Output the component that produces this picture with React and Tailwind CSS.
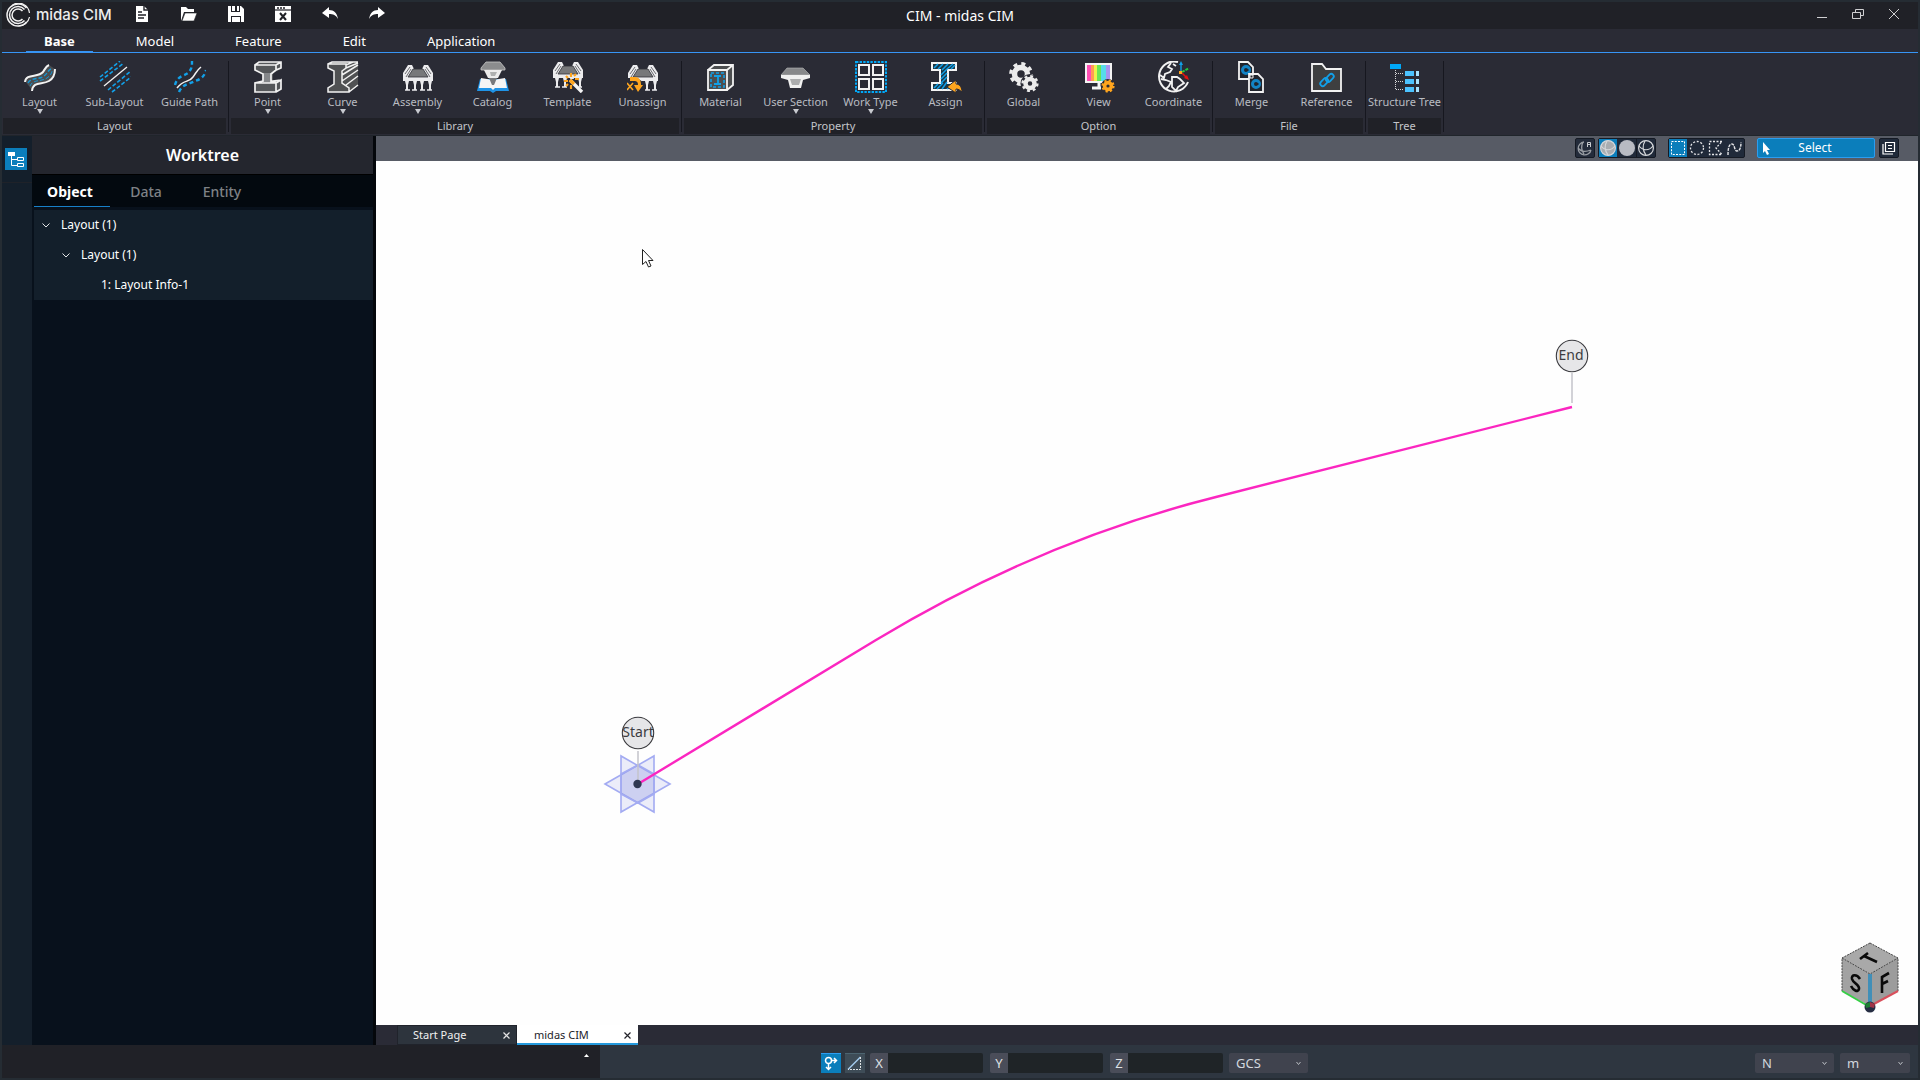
import React, { useState } from "react";
import clsx from "clsx";

/* ---------- quick access icons ---------- */

const NewIcon = () => (
  <svg width="16" height="18" viewBox="0 0 16 18">
    <path d="M2 1h8l4 4v12H2z" fill="#fff" />
    <path d="M10 1v4h4M4 7h4M4 10h8M4 13h6" stroke="#202127" strokeWidth="1.4" fill="none" />
  </svg>
);

const OpenIcon = () => (
  <svg width="18" height="18" viewBox="0 0 18 18">
    <path d="M1 16V2h5l2 2h6v3H4z" fill="#fff" />
    <path d="M5 8h12l-3 8H2z" fill="#fff" stroke="#202127" strokeWidth="0.6" />
  </svg>
);

const SaveIcon = () => (
  <svg width="18" height="18" viewBox="0 0 18 18">
    <path d="M1 1h13l3 3v13H1z" fill="#fff" />
    <path d="M4 1h9v6H4zM4 11h10v6H4z" fill="#202127" />
    <path d="M5 1h3v5H5zM10 1h2v5h-2zM5 12h8v5H5z" fill="#fff" />
  </svg>
);

const CloseFileIcon = () => (
  <svg width="18" height="18" viewBox="0 0 18 18">
    <path d="M1 1h16v16H1z" fill="#fff" />
    <path d="M1 5h16" stroke="#202127" strokeWidth="1.2" />
    <path d="M3 3h2M6 3h2M9 3h2" stroke="#202127" strokeWidth="1.4" />
    <path d="M6 8l6 7M12 8l-6 7" stroke="#202127" strokeWidth="2" />
  </svg>
);

const UndoIcon = () => (
  <svg width="18" height="14" viewBox="0 0 18 14">
    <path d="M8 0v3c5 0 8 3 9 9-2-4-5-5-9-5v4L1 6z" fill="#fff" />
  </svg>
);

const RedoIcon = () => (
  <svg width="18" height="14" viewBox="0 0 18 14">
    <path d="M10 0v3c-5 0-8 3-9 9 2-4 5-5 9-5v4l7-5z" fill="#fff" />
  </svg>
);

/* ---------- ribbon icons, all on a 32px grid ---------- */

const Icon = ({ children }) => (
  <svg width="32" height="32" viewBox="0 0 32 32" fill="none">
    {children}
  </svg>
);

const LayoutIcon = () => (
  <Icon>
    <path d="M1 20C2 12 14 17 19 11C21 8 22 5 25 4L31 8C31 13 30 17 25 20C18 24 9 20 8 29z" fill="#4b4d50" />
    <path d="M1 21C2 12 14 17 19 11C21 8 22 5 25 4" stroke="#f2f2f2" strokeWidth="2" />
    <path d="M8 30C9 20 18 24 25 20C30 17 31 13 31 8" stroke="#f2f2f2" strokeWidth="2" />
    <path d="M4 22C7 16 15 19 20 15C24 12 24 9 27 8" stroke="#1597d4" strokeWidth="1.4" strokeDasharray="4 2" />
    <path d="M6 25C9 18 17 21 23 17C26 15 28 12 28 10" stroke="#1597d4" strokeWidth="1" strokeDasharray="4 2" />
  </Icon>
);

const SubLayoutIcon = () => (
  <Icon>
    <path d="M5 25L28 6" stroke="#f2f2f2" strokeWidth="1.3" />
    <path d="M1 16L21 0M1 20L25 2M9 29L32 10M13 31L32 16" stroke="#12a0e8" strokeWidth="1.6" strokeDasharray="4 2" />
  </Icon>
);

const GuidePathIcon = () => (
  <Icon>
    <path d="M3 27C10 18 15 22 19 16C22 12 23 9 27 6" stroke="#f2f2f2" strokeWidth="1.5" />
    <path d="M1 24C3 15 10 15 14 12C18 8 18 5 18 0" stroke="#12a0e8" strokeWidth="2.4" strokeDasharray="4 3" />
    <path d="M5 31C8 23 16 23 21 20C28 18 31 14 32 9" stroke="#12a0e8" strokeWidth="2.4" strokeDasharray="4 3" />
  </Icon>
);

const PointIcon = () => (
  <Icon>
    <path d="M3 4L7 1H29V8L21 12V21H29V28L24 31H3V23L11 21V12L3 9z" fill="#55575a" />
    <path d="M11 12h8v10h-8z" fill="#85878a" />
    <path
      d="M3 4H24V9L19 13V21H24V31H3V22L11 20V13L3 9zM3 4L7 1H29V7L24 9M24 4L29 1M24 22L29 19V28L24 31M24 22L21 20L29 19M3 22H24"
      stroke="#f2f2f2"
      strokeWidth="1.7"
    />
  </Icon>
);

const CurveIcon = () => (
  <Icon>
    <path d="M1 4L5 1H31V25L22 31H1V27L7 23V10L1 7z" fill="#505153" />
    <path
      d="M1 3H19V7L15 10V22L22 27V31H1V27L7 23V10L1 7zM1 3L5 1H31M19 4L26 1M19 7L31 2M15 14L31 4M15 20L31 9M19 24L31 15M22 31L31 24"
      stroke="#f2f2f2"
      strokeWidth="1.5"
    />
  </Icon>
);

// bridge deck on four piers, shared by the assembly type icons
const Bridge = () => (
  <g>
    <path d="M1 12L6 4H10L12 8H20L22 4H26L31 12V20H1z" fill="#ececee" />
    <path d="M11 8H21L26 16H6z" fill="#77787a" stroke="#303137" strokeWidth="0.8" />
    <path d="M3 13L8 6M29 13L24 6M4 16L9 8M28 16L23 8" stroke="#6a6b70" strokeWidth="1" />
    <path d="M3 20H7L6 24V29H4V24zM11 20H15L14 24V29H12V24zM18 20H22L21 24V29H19V24zM26 20H30L29 24V29H27V24z" fill="#ececee" />
    <path d="M3 29H8M10 29H15M18 29H23M25 29H30" stroke="#ececee" strokeWidth="1.4" />
  </g>
);

const AssemblyIcon = () => (
  <Icon>
    <Bridge />
  </Icon>
);

const CatalogIcon = () => (
  <Icon>
    <path d="M3 18H29L32 30H19L16 32L13 30H0z" fill="#1f93e6" />
    <path d="M4 17L16 19L28 17L30 27H18L16 29L14 27H2z" fill="#f5f5f5" />
    <path d="M12 17H20L17 24H15z" fill="#77797c" />
    <path d="M9 1H23L28 7V9H4V7z" fill="#8b8c8e" stroke="#c8c8c8" strokeWidth="0.8" />
    <path d="M7 9H25L21 17H11z" fill="#ececec" />
    <path d="M13 11H20L18 15H14z" fill="#aeb0b0" />
  </Icon>
);

const TemplateIcon = () => (
  <Icon>
    <g transform="translate(0 -3)">
      <Bridge />
    </g>
    <path d="M15 18H24L28 28L20 27z" fill="#2a2b35" />
    <path d="M18 19L30 31" stroke="#f5f5f5" strokeWidth="3.4" />
    <path d="M18 19L22 23" stroke="#ffa51e" strokeWidth="3.4" />
    <path
      d="M19 12v4M19 24v4M12 20h4M23 18h4M14 15l2 2M24 13l-2 2M14 25l2-2"
      stroke="#ffa51e"
      strokeWidth="2.2"
    />
  </Icon>
);

const UnassignIcon = () => (
  <Icon>
    <Bridge />
    <path d="M0 17H10L16 21V31H0z" fill="#2a2b35" />
    <path d="M0 22l6 7M6 22l-6 7" stroke="#ffa51e" strokeWidth="1.6" />
    <path d="M3 16h5c4 0 6 3 6 8h-3c0-3-1-4-4-4H3z" fill="#ffa51e" />
    <path d="M7 24H16L11 31z" fill="#ffa51e" />
  </Icon>
);

const MaterialIcon = () => (
  <Icon>
    <path d="M3 9L9 4H28V24L23 29H3z" fill="#4c4e50" />
    <path d="M3 9H22V29H3zM3 9L9 4H28V24L22 29M22 9L28 4" stroke="#f2f2f2" strokeWidth="1.8" />
    <rect x="6" y="12" width="13" height="14" stroke="#12a0e8" strokeWidth="1.6" strokeDasharray="3 2" />
    <path d="M9 15H16M13 15V23M9 23H16" stroke="#12a0e8" strokeWidth="1.8" />
  </Icon>
);

const UserSectionIcon = () => (
  <Icon>
    <path d="M7 7H23L30 14H1z" fill="#87888a" stroke="#b9babb" strokeWidth="0.6" />
    <path d="M1 14H30V17L23 19L21 27H10L8 19L1 17z" fill="#f0f0f0" />
    <path d="M10 18H21L19 24H12z" fill="#acadae" />
  </Icon>
);

const WorkTypeIcon = () => (
  <Icon>
    <rect x="1" y="1" width="30" height="30" stroke="#00a8f8" strokeWidth="2" strokeDasharray="2.4 1.2" />
    <path d="M4 4H14V14H4zM18 4H28V14H18zM4 18H14V28H4zM18 18H28V28H18z" stroke="#f2f2f2" strokeWidth="2" />
  </Icon>
);

const AssignIcon = () => (
  <Icon>
    <path d="M2 2H26V9H18V22H26V29H2V22H10V9H2z" fill="#1b3644" stroke="#f4f4f4" strokeWidth="2" />
    <path
      d="M4 7L8 3M8 8L13 3M12 9L18 3M17 8L23 3M21 8L25 4M11 14L17 8M11 18L17 12M11 22L17 16M4 27L8 23M7 28L13 22M12 28L17 21M17 28L21 24"
      stroke="#12a0e8"
      strokeWidth="1.5"
    />
    <path d="M26 19V23C30 23 32 27 32 31C30 29 28 28 26 28V32L17 26z" fill="#ffa51e" stroke="#2a2b35" />
  </Icon>
);

const GlobalIcon = () => (
  <Icon>
    <circle cx="13" cy="13" r="6.5" stroke="#ececec" strokeWidth="5.5" />
    <circle cx="13" cy="13" r="10.2" stroke="#ececec" strokeWidth="3.4" strokeDasharray="4 4.01" />
    <circle cx="22" cy="22.5" r="9.5" fill="#2a2b35" />
    <circle cx="22" cy="22.5" r="4.5" stroke="#ececec" strokeWidth="4.5" />
    <circle cx="22" cy="22.5" r="7.4" stroke="#ececec" strokeWidth="2.4" strokeDasharray="2.9 2.91" />
  </Icon>
);

const ViewIcon = () => (
  <Icon>
    <path d="M3 3H8V21H3z" fill="#ff4fb4" />
    <path d="M8 3H11V21H8z" fill="#ff9b54" />
    <path d="M11 3H14V21H11z" fill="#eef04a" />
    <path d="M14 3H18V21H14z" fill="#67e557" />
    <path d="M18 3H23V21H18z" fill="#57dcea" />
    <path d="M23 3H28V21H23z" fill="#a894ee" />
    <path d="M3 3H28V21H3z" stroke="#f4f4f4" strokeWidth="2" />
    <path d="M16 21V26M9 27H18" stroke="#f4f4f4" strokeWidth="3" />
    <circle cx="25" cy="25" r="7" fill="#2a2b35" />
    <circle cx="25" cy="25" r="3.4" stroke="#ffa51e" strokeWidth="3.6" />
    <circle cx="25" cy="25" r="5.6" stroke="#ffa51e" strokeWidth="2" strokeDasharray="2.2 2.2" />
  </Icon>
);

const CoordinateIcon = () => (
  <Icon>
    <path d="M20 1A15 15 0 1 0 30 21" stroke="#f2f2f2" strokeWidth="2" />
    <path
      d="M13 2L10 6L14 8L12 11L7 13L6 17L2 14M3 18L8 19L13 21L11 25L8 28M15 3L18 5M14 16L19 16L22 18L26 22L20 26L18 30L14 26V21z"
      stroke="#f2f2f2"
      strokeWidth="1.8"
    />
    <path d="M23 10V2" stroke="#12a0e8" strokeWidth="1.4" />
    <path d="M21 4L23 0L25 4z" fill="#12a0e8" />
    <path d="M24 11L31 7" stroke="#24c93c" strokeWidth="2" strokeDasharray="3 1" />
    <path d="M24 12L29 17" stroke="#e01212" strokeWidth="1.6" />
    <path d="M31 19L26 17L29 14z" fill="#e01212" />
    <rect x="21" y="10" width="3" height="3" fill="#ffa51e" />
  </Icon>
);

const MergeIcon = () => (
  <Icon>
    <path d="M3 1H12L17 6V18H3z" stroke="#f2f2f2" strokeWidth="1.8" fill="#20242c" />
    <circle cx="10" cy="9" r="3.5" stroke="#1383c4" strokeWidth="3" />
    <path d="M13 13H22L27 18V31H13z" stroke="#f2f2f2" strokeWidth="1.8" fill="#20242c" />
    <circle cx="20" cy="23" r="3.5" stroke="#1383c4" strokeWidth="3" />
    <path d="M11 8V10M21 22V24" stroke="#20242c" strokeWidth="3" />
    <path d="M14 14H17V17H14z" stroke="#f2f2f2" strokeWidth="1" />
  </Icon>
);

const ReferenceIcon = () => (
  <Icon>
    <path d="M1 3H11L15 8H30V30H1z" stroke="#f2f2f2" strokeWidth="1.8" fill="#3e3f40" />
    <g transform="rotate(-45 16 19)" stroke="#12a0e8" strokeWidth="1.8">
      <rect x="8" y="16" width="9" height="5" rx="2.5" />
      <rect x="15" y="17" width="9" height="5" rx="2.5" />
    </g>
  </Icon>
);

const StructureTreeIcon = () => (
  <Icon>
    <path d="M1 3H12V8H1z" fill="#00a8f8" />
    <path d="M6.5 9V29M7 12.5H15M7 20.5H15M7 28.5H15" stroke="#d8d8d8" strokeWidth="1" strokeDasharray="1 1" />
    <path d="M16 10H25V15H16zM16 18H25V23H16zM16 26H25V31H16z" fill="#4cc3ff" />
    <path d="M27 10H30V15H27zM27 18H30V23H27zM27 26H30V31H27z" fill="#a5e2ff" />
  </Icon>
);

const ribbon = [
  {
    name: "Layout",
    tools: [
      { label: "Layout", icon: LayoutIcon, menu: true },
      { label: "Sub-Layout", icon: SubLayoutIcon },
      { label: "Guide Path", icon: GuidePathIcon },
    ],
  },
  {
    name: "Library",
    tools: [
      { label: "Point", icon: PointIcon, menu: true },
      { label: "Curve", icon: CurveIcon, menu: true },
      { label: "Assembly", icon: AssemblyIcon, menu: true },
      { label: "Catalog", icon: CatalogIcon },
      { label: "Template", icon: TemplateIcon },
      { label: "Unassign", icon: UnassignIcon },
    ],
  },
  {
    name: "Property",
    tools: [
      { label: "Material", icon: MaterialIcon },
      { label: "User Section", icon: UserSectionIcon, menu: true },
      { label: "Work Type", icon: WorkTypeIcon, menu: true },
      { label: "Assign", icon: AssignIcon },
    ],
  },
  {
    name: "Option",
    tools: [
      { label: "Global", icon: GlobalIcon },
      { label: "View", icon: ViewIcon },
      { label: "Coordinate", icon: CoordinateIcon },
    ],
  },
  {
    name: "File",
    tools: [
      { label: "Merge", icon: MergeIcon },
      { label: "Reference", icon: ReferenceIcon },
    ],
  },
  {
    name: "Tree",
    tools: [{ label: "Structure Tree", icon: StructureTreeIcon }],
  },
];

const quickActions = [
  { label: "New", icon: NewIcon },
  { label: "Open", icon: OpenIcon },
  { label: "Save", icon: SaveIcon },
  { label: "Close", icon: CloseFileIcon },
  { label: "Undo", icon: UndoIcon },
  { label: "Redo", icon: RedoIcon },
];

const TitleBar = () => (
  <header className="relative flex h-[27px] items-center justify-between bg-[#202127]">
    <div className="flex items-center">
      <div className="flex w-[116px] items-center gap-1 pl-1">
        <svg width="26" height="25" viewBox="0 0 25 25" fill="none" stroke="#f2f2f2">
          <path d="M20 5A11 11 0 1 0 20 19" strokeWidth="1.5" />
          <path d="M23 10A11 11 0 0 0 6 2" strokeWidth="1.2" />
          <path d="M18 6.5A8.5 8.5 0 1 0 18 17.5" strokeWidth="1.5" />
          <path d="M16 8A6 6 0 1 0 16 16" strokeWidth="1.5" />
          <path d="M23 14A11 11 0 0 1 12 23" strokeWidth="1.2" />
        </svg>
        <span className="font-[Inter,sans-serif] text-[15px] font-medium whitespace-nowrap text-[#ececec]">
          midas CIM
        </span>
      </div>
      {quickActions.map((action) => (
        <button
          key={action.label}
          aria-label={action.label}
          className="flex h-[27px] w-[47px] items-center justify-center pb-[3px]"
        >
          <action.icon />
        </button>
      ))}
    </div>
    <h1 className="absolute left-1/2 -translate-x-1/2 text-sm text-white">CIM - midas CIM</h1>
    <div className="flex items-center pr-[6px] pb-[3px]">
      <button aria-label="Minimize" className="flex w-9 justify-center">
        <svg width="12" height="12" viewBox="0 0 12 12">
          <path d="M1 9.5H11" stroke="#d0d0d2" />
        </svg>
      </button>
      <button aria-label="Restore" className="flex w-9 justify-center">
        <svg width="12" height="12" viewBox="0 0 12 12" fill="none" stroke="#d0d0d2">
          <path d="M0.5 4.5H8.5V10.5H0.5zM3.5 4V1.5H11.5V7.5H9" />
        </svg>
      </button>
      <button aria-label="Close window" className="flex w-9 justify-center">
        <svg width="12" height="12" viewBox="0 0 12 12">
          <path d="M1 1L11 11M11 1L1 11" stroke="#d0d0d2" />
        </svg>
      </button>
    </div>
  </header>
);

const menus = ["Base", "Model", "Feature", "Edit", "Application"];

const MenuTabs = () => {
  const [active, setActive] = useState("Base");

  return (
    <nav className="flex h-6 gap-[25px] border-b border-[#3795f5] pl-6">
      {menus.map((m) => (
        <button
          key={m}
          onClick={() => setActive(m)}
          className={clsx(
            "h-[23px] border-b px-[18px] text-[13px] leading-6 text-white",
            active === m ? "border-[#3795f5] font-bold" : "border-transparent"
          )}
        >
          {m}
        </button>
      ))}
    </nav>
  );
};

const Ribbon = () => (
  <div className="flex h-[83px] border-b border-[#20252b] pt-2">
    {ribbon.map((group) => (
      <section key={group.name} className="flex">
        <div className="flex flex-col">
          <div className="flex h-[57px]">
            {group.tools.map((tool) => (
              <button key={tool.label} className="flex w-[75px] flex-col items-center text-[11px] text-[#b9bcc2]">
                <tool.icon />
                <span className="h-[15px] leading-[18px] whitespace-nowrap">{tool.label}</span>
                {tool.menu && (
                  <svg width="6" height="5" viewBox="0 0 6 5" className="mt-px">
                    <path d="M0 0H6L3 5z" fill="#c8cad0" />
                  </svg>
                )}
              </button>
            ))}
          </div>
          <h2 className="mx-px h-4 bg-[#202127] text-center text-[11px] leading-4 text-[#c3c5ca]">{group.name}</h2>
        </div>
        <div className="mx-px h-[71px] w-px bg-[#16171f]" />
      </section>
    ))}
  </div>
);

const treeRows = [
  { label: "Layout (1)", pad: "pl-2", open: true },
  { label: "Layout (1)", pad: "pl-7", open: true },
  { label: "1: Layout Info-1", pad: "pl-12" },
];

const Worktree = () => {
  const [tab, setTab] = useState("Object");

  return (
    <aside className="flex shrink-0">
      <div className="w-[30px] bg-[#141f2b]">
        <div className="flex h-[47px] items-center border-b border-[#1f2229] pl-[3px]">
          <button aria-label="Worktree" className="h-[22px] w-[22px] bg-[#0b7ebb]">
            <svg width="22" height="22" viewBox="0 0 22 22" fill="none" stroke="#fff">
              <path d="M3 4H10V8H3z" fill="#fff" stroke="none" />
              <path d="M6.5 8V17.5H12M6.5 11.5H12M12.5 9.5H18.5V12.5H12.5zM12.5 15.5H18.5V18.5H12.5z" />
            </svg>
          </button>
        </div>
      </div>
      <div className="w-[341px] bg-[#08111c]">
        <h2 className="h-[39px] border-b border-black bg-[#24262e] text-center text-base leading-[38px] font-semibold text-white">
          Worktree
        </h2>
        <div className="flex h-8 bg-[#03090f] pl-[2px]">
          {["Object", "Data", "Entity"].map((t) => (
            <button
              key={t}
              onClick={() => setTab(t)}
              className={clsx(
                "w-[76px] border-b pr-1 text-sm leading-[34px]",
                tab === t ? "border-[#1880c8] font-bold text-white" : "border-transparent font-medium text-[#7f8286]"
              )}
            >
              {t}
            </button>
          ))}
        </div>
        <ul className="mt-[3px] ml-[2px] bg-[#131f2b] text-xs text-white">
          {treeRows.map((row, i) => (
            <li key={i} className={clsx("flex h-[30px] items-center gap-[11px]", row.pad)}>
              <svg width="8" height="8" viewBox="0 0 8 8" fill="none">
                {row.open && <path d="M0.5 2.5L4 6L7.5 2.5" stroke="#e4e6e8" />}
              </svg>
              {row.label}
            </li>
          ))}
        </ul>
      </div>
      <div className="w-[3px] bg-[#04070b]" />
    </aside>
  );
};

const Sphere = ({ fill }) => (
  <svg width="18" height="18" viewBox="0 0 18 18" fill="none" stroke="#d5d7da" strokeWidth="1.2">
    <circle cx="9" cy="9" r="7.4" fill={fill} />
    <path d="M2 7C6 12 12 12 16 7M8 2C5 7 6 12 9 16" />
  </svg>
);

const ViewToolbar = () => (
  <div className="flex h-[25px] items-center justify-end bg-[#575b65] pr-[19px] pb-px">
    <button
      aria-label="Auto view"
      className="flex h-5 w-5 items-center justify-center rounded-xs border border-[#151a24] bg-[#242c3b]"
    >
      <svg width="18" height="18" viewBox="0 0 18 18" fill="none" stroke="#999da3" strokeWidth="1.3">
        <path d="M8 3A6.5 6.5 0 1 0 15 11M2 9C5 13 10 13 15 11M7 3C5 7 5 11 8 15" />
        <path d="M11.5 8V3.5H14.5V8M11.5 5.5H14.5" stroke="#c9ccd0" strokeWidth="1" />
      </svg>
    </button>
    <div className="ml-[3px] flex h-5 items-center rounded-xs border border-[#151a24] bg-[#202a3a]">
      <button aria-label="Shaded with edges" className="bg-[#0b7ebb]">
        <Sphere fill="#a9adb1" />
      </button>
      <button aria-label="Shaded" className="flex h-[18px] w-5 items-center justify-center border-r border-[#151a24]">
        <span className="h-4 w-4 rounded-full bg-[#b8bbc3]" />
      </button>
      <button aria-label="Wireframe">
        <Sphere fill="none" />
      </button>
    </div>
    <div className="ml-3 flex h-5 items-center rounded-xs border border-[#151a24] bg-[#202a3a]">
      <button aria-label="Rectangle selection" className="bg-[#0b7ebb]">
        <svg width="18" height="18" viewBox="0 0 18 18" fill="none">
          <rect x="2.5" y="2.5" width="13" height="13" stroke="#fff" strokeDasharray="2 1.25" />
        </svg>
      </button>
      <button aria-label="Circle selection">
        <svg width="20" height="18" viewBox="0 0 20 18" fill="none">
          <circle cx="10" cy="9" r="6.5" stroke="#e4e5e8" strokeWidth="1.3" strokeDasharray="2 1.7" />
        </svg>
      </button>
      <button aria-label="Polygon selection">
        <svg width="18" height="18" viewBox="0 0 18 18" fill="none">
          <path d="M15 2.5H2.5V15.5H15L9 9z" stroke="#e4e5e8" strokeWidth="1.3" strokeDasharray="2 1.5" />
        </svg>
      </button>
      <button aria-label="Polyline selection">
        <svg width="19" height="18" viewBox="0 0 19 18" fill="none">
          <path d="M3 16C3 9 4 5 7 5C10 5 9 12 12 12C15 12 16 8 16 3" stroke="#e4e5e8" strokeWidth="1.4" strokeDasharray="3 1" />
        </svg>
      </button>
    </div>
    <button className="relative ml-3 h-5 w-[118px] rounded-xs border border-[#2c9df0] bg-[#0b7ebb] pr-[2px] text-xs leading-4 text-white">
      <svg width="10" height="13" viewBox="0 0 10 13" className="absolute top-[3px] left-1">
        <path d="M1 0V11L3 9L5 13L7 12L5 8H8z" fill="#fff" />
      </svg>
      Select
    </button>
    <button
      aria-label="Windows"
      className="ml-1 flex h-5 w-5 items-center justify-center rounded-xs border border-[#151a24] bg-[#202a3a]"
    >
      <svg width="14" height="14" viewBox="0 0 14 14" fill="none" stroke="#fff">
        <path d="M3.5 1.5H12.5V10.5H3.5zM1 3V13H11M6 4.5H10M6 7.5H10" strokeWidth="1.2" />
      </svg>
    </button>
  </div>
);

const Viewport = () => (
  <div className="relative min-h-0 flex-1 bg-[#fefefe]">
    <svg className="block h-full w-full" viewBox="0 0 1542 864" fill="none">
      {/* origin planes */}
      <g fill="#8a90e0" fillOpacity="0.16" stroke="#a3abf2" strokeWidth="1.6">
        <path d="M229 623L278 595V651z" />
        <path d="M294 623L245 595V651z" />
        <path d="M245 613L262 604L278 613V633L262 642L245 633z" />
      </g>
      <path d="M262 590V623M1196 212V242" stroke="#c3c3ca" strokeWidth="1.5" />
      <path d="M262 623L500 479Q664 380 840 336L1196 246" stroke="#fb26c0" strokeWidth="2.4" />
      <circle cx="261.5" cy="623" r="4.2" fill="#2f3852" />
      <g fill="#e6e6e8" stroke="#3a3a3e" strokeWidth="1.1">
        <circle cx="262" cy="572" r="15.7" />
        <circle cx="1196" cy="195" r="15.7" />
      </g>
      <g fill="#3c3c40" fontSize="14" textAnchor="middle">
        <text x="262" y="576">Start</text>
        <text x="1195" y="199">End</text>
      </g>
      {/* mouse pointer */}
      <path d="M266.5 88.5V103.5L270 100.5L272.5 106L275 105L272.5 99.5H277z" fill="#fff" stroke="#222" />
    </svg>
    {/* view cube */}
    <svg className="absolute right-[18px] bottom-[10px] h-[74px] w-[60px]" viewBox="0 0 60 74" fill="none">
      <path d="M30 2L58 17L30 33L2 17z" fill="#a9a9a9" />
      <path d="M2 17L30 33V65L2 50z" fill="#a2a2a2" />
      <path d="M58 17L30 33V65L58 50z" fill="#9c9c9c" />
      <path d="M30 2L58 17V50M30 2L2 17V50M2 17L30 33L58 17" stroke="#444" strokeDasharray="2 1" />
      <path d="M30 33V63" stroke="#418fb8" strokeWidth="4" />
      <path d="M2 50L28 65" stroke="#35cf45" strokeWidth="2" />
      <path d="M58 50L32 64" stroke="#d9505c" strokeWidth="2" />
      <g stroke="#0a0a0a" strokeWidth="2.6">
        <path d="M20 18L28 12M24 15L37 21" />
        <path d="M20 38C17 33 11 33 12 38C13 42 20 44 19 48C18 52 13 49 11 45" />
        <path d="M42 52V36L49 32M42 43L48 40" />
      </g>
      <circle cx="30" cy="66" r="5.5" fill="#252d42" />
      <path d="M25 63L30 61V66L26 67z" fill="#1e7e34" />
      <path d="M35 63L30 61V66L34 67z" fill="#a13548" />
    </svg>
  </div>
);

const CloseX = ({ color }) => (
  <svg width="7" height="7" viewBox="0 0 7 7">
    <path d="M0.5 0.5L6.5 6.5M6.5 0.5L0.5 6.5" stroke={color} strokeWidth="1.2" />
  </svg>
);

const PageTabs = () => (
  <div className="flex h-5 bg-[#2a2b36] pl-[21px] text-[11px]">
    <button className="flex w-[120px] items-center justify-between border border-[#20232b] bg-[#2d343d] pr-[6px] pl-[15px] text-[#f0f0f0]">
      Start Page
      <CloseX color="#e4e4e4" />
    </button>
    <button className="flex w-[121px] items-center justify-between border-b-2 border-[#2499dc] bg-white pt-[2px] pr-[7px] pl-[17px] text-[#23232a]">
      midas CIM
      <CloseX color="#23232a" />
    </button>
  </div>
);

const Combo = ({ label, options, width }) => (
  <div className={clsx("relative h-5", width)}>
    <select
      aria-label={label}
      className="block h-5 w-full appearance-none rounded-xs bg-[#40434e] pl-[7px] text-[13px] leading-5 text-[#d3d8de]"
    >
      {options.map((o) => (
        <option key={o}>{o}</option>
      ))}
    </select>
    <svg width="5" height="5" viewBox="0 0 5 5" className="pointer-events-none absolute top-2 right-[7px]" fill="none">
      <path d="M0.5 1L2.5 3.5L4.5 1" stroke="#b7bbc0" />
    </svg>
  </div>
);

const StatusBar = () => (
  <footer className="flex h-[33px] bg-[#2e3640]">
    <div className="flex w-[598px] items-start justify-end bg-[#202127] pr-[11px]">
      <button aria-label="Expand messages" className="flex h-5 items-center">
        <svg width="5" height="3" viewBox="0 0 5 3">
          <path d="M0 3L2.5 0L5 3z" fill="#fff" />
        </svg>
      </button>
    </div>
    <div className="ml-[221px] flex flex-1 items-start pt-2 pr-2">
      <button aria-label="Snap" className="h-5 w-5 border-t border-[#2c9df0] bg-[#0b7ebb]">
        <svg width="20" height="19" viewBox="0 0 20 19" fill="none" stroke="#fff" strokeWidth="1.5">
          <circle cx="7.5" cy="6.5" r="3" />
          <path d="M10 6.5H15M7.500 10V15M13 4L15.5 6.5L13 9M5 13L7.5 15.5L10 13" />
        </svg>
      </button>
      <button aria-label="Relative input" className="ml-1 h-5 w-5 border-t border-[#4c6470] bg-[#3e4c57]">
        <svg width="20" height="19" viewBox="0 0 20 19" fill="none">
          <path d="M3 15.5L15.5 3" stroke="#a5cdf0" strokeWidth="1.4" />
          <path d="M15.5 3V15.5H3" stroke="#dfe3e6" strokeDasharray="2 1" />
        </svg>
      </button>
      <div className="ml-[5px] flex gap-[7px]">
        {["X", "Y", "Z"].map((axis) => (
          <div key={axis} className="flex h-5">
            <label htmlFor={axis} className="w-[18px] rounded-l-xs bg-[#4a4d59] text-center text-[13px] leading-5 text-[#dfe1e5]">
              {axis}
            </label>
            <input id={axis} type="text" className="w-[95px] rounded-r-xs bg-[#1f2427] px-1 text-xs text-white" />
          </div>
        ))}
      </div>
      <div className="ml-[6px] flex flex-1 justify-between">
        <Combo label="Coordinate system" options={["GCS", "UCS"]} width="w-[79px]" />
        <div className="flex gap-[6px]">
          <Combo label="Force unit" options={["N", "kN"]} width="w-[79px]" />
          <Combo label="Length unit" options={["m", "mm"]} width="w-[70px]" />
        </div>
      </div>
    </div>
  </footer>
);

const App = () => (
  <div className="flex h-screen flex-col border-2 border-[#252c33] bg-[#2a2b35] font-['Noto_Sans',sans-serif]">
    <TitleBar />
    <MenuTabs />
    <Ribbon />
    <div className="flex min-h-0 flex-1">
      <Worktree />
      <main className="flex min-w-0 flex-1 flex-col">
        <ViewToolbar />
        <Viewport />
        <PageTabs />
      </main>
    </div>
    <StatusBar />
  </div>
);

export default App;
